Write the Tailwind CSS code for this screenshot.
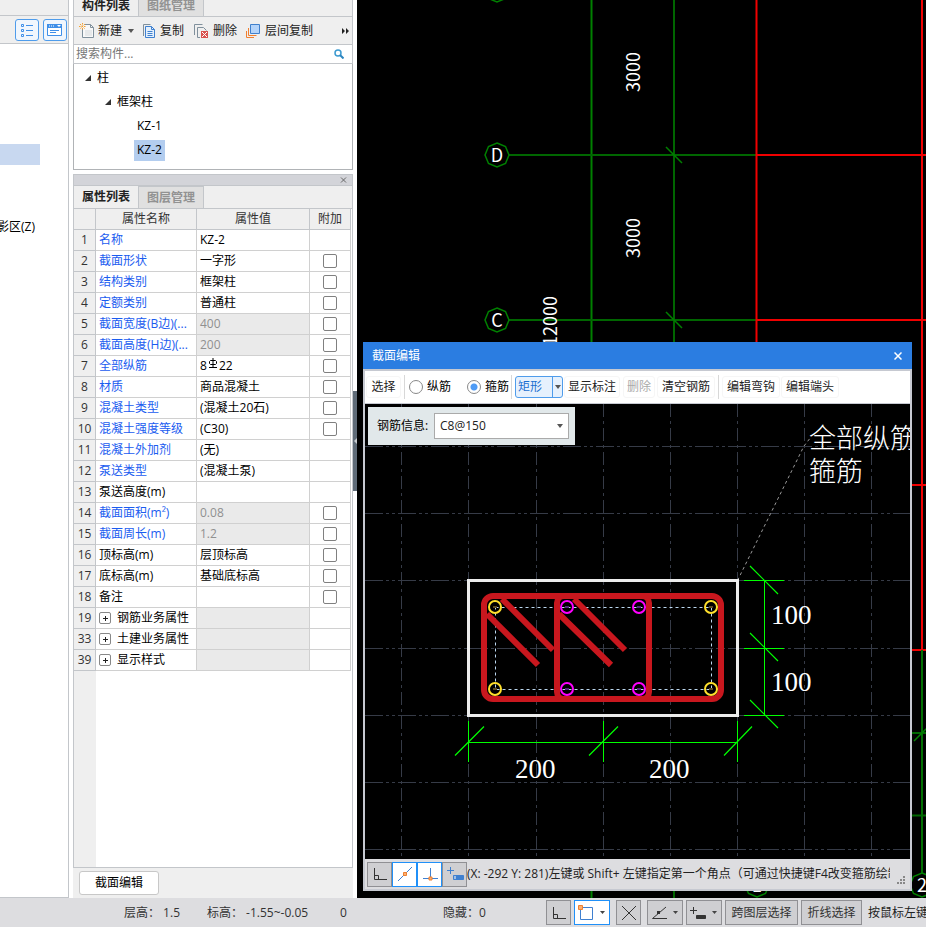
<!DOCTYPE html>
<html lang="zh-CN">
<head>
  <meta charset="UTF-8" />
  <meta name="viewport" content="width=device-width, initial-scale=1.0" />
  <title>构件列表 - 截面编辑</title>
  <script src="https://cdn.jsdelivr.net/npm/@tailwindcss/browser@4"></script>
</head>
<body class="h-screen flex flex-col overflow-hidden bg-white text-black text-[12px] leading-[20px] font-['Open_Sans','Noto_Sans_CJK_SC',sans-serif]">

  <main class="flex-1 min-h-0 flex">

    <!-- Navigation strip -->
    <aside class="w-[69px] shrink-0 mr-1 border-r border-b border-[#c3c6ca] overflow-hidden">
      <div class="h-4 bg-[#efefef] border-b border-[#c3c6ca]"></div>
      <div class="h-7 bg-[#efefef] border-b border-[#c3c6ca] flex items-center justify-end gap-1 pr-px">
        <button aria-label="列表" class="w-6 h-[22px] border border-[#4f9ceb] rounded-[3px] bg-[#f0f6fd] flex items-center justify-center">
          <svg width="14" height="14" fill="none" stroke="#3f8fe8"><path d="M1.500 1.500h2v2h-2zM1.500 6.500h2v2h-2zM1.500 11.500h2v2h-2z"/><path d="M6 2.500h7M6 7.500h7M6 12.500h7"/></svg>
        </button>
        <button aria-label="窗口" class="w-6 h-[22px] border border-[#4f9ceb] rounded-[3px] bg-[#f0f6fd] flex items-center justify-center">
          <svg width="16" height="14" fill="none" stroke="#3f8fe8"><path d="M.5 1.500h14v11h-14z" fill="#fff"/><path d="M0 3h15" stroke-width="4"/><path d="M2 3h5" stroke="#fff" stroke-dasharray="1 1"/><path d="M10 2h4l-2 2z" fill="#fff" stroke="none"/><path d="M3 7.500h9M3 9.500h6"/></svg>
        </button>
      </div>
      <div class="mt-[100px] w-10 h-[21px] bg-[#c8d8f0]"></div>
      <div class="mt-[52px] -ml-[3px] whitespace-nowrap">影区(Z)</div>
    </aside>

    <!-- Component list and properties -->
    <section class="w-[280px] shrink-0 flex flex-col bg-[#efefef]">
      <div class="h-[17px] shrink-0 flex border-x border-b border-[#c3c6ca]">
        <button class="w-16 h-4 font-bold text-[#222] flex items-end justify-center">构件列表</button>
        <button class="w-[66px] h-4 font-bold text-[#929292] bg-[#e0e0e0] border-x border-[#c3c6ca] flex items-end justify-center">图纸管理</button>
      </div>
      <div class="h-7 shrink-0 flex items-center border-x border-b border-[#c3c6ca] pl-[5px] pr-[2px] text-[#222]">
        <button class="flex items-center gap-[3px]">
          <svg width="16" height="16" fill="none"><path d="M3.500 6v8.500h11V4.500l-3-3H6" fill="#f8f8f8" stroke="#80909c"/><path d="M11.500 1.500v3h3" stroke="#80909c"/><path d="M6 8h7M6 10h7M6 12h7" stroke="#d5d9dc"/><path d="M1 1l5 5M6 1L1 6M3.500 0v7M0 3.500h7" stroke="#f7a12e" stroke-dasharray="1.500 1"/></svg>
          新建
        </button>
        <svg class="ml-[6px] mr-2" width="6" height="4"><path d="M0 0h6L3 4z" fill="#555"/></svg>
        <button class="flex items-center gap-1">
          <svg width="14" height="16" fill="none" stroke="#3f80cf"><path d="M1.500 13V1.500h7" stroke="#80909c"/><path d="M3.500 3.500h6l3 3v8h-9z" fill="#e4f0fd"/><path d="M9.500 3.500v3h3M5.500 8.500h5M5.500 10.500h5M5.500 12.500h5"/></svg>
          复制
        </button>
        <button class="ml-[9px] flex items-center gap-1">
          <svg width="16" height="16" fill="none" stroke="#80909c"><path d="M1.500 12V1.500h8"/><path d="M7 14.500H4.500v-10h6l3 3"/><path d="M8 8h7v7H8z" fill="#d9534f" stroke="none"/><path d="M9 9l5 5M14 9l-5 5" stroke="#fff"/></svg>
          删除
        </button>
        <button class="ml-2 flex items-center gap-1">
          <svg width="16" height="16" fill="none"><path d="M1.500 8v6.500H9M3.500 5v7.500h8" stroke="#f08030"/><path d="M5.500 1.500h9v9h-9z" fill="#b4d4fa" stroke="#4080cc"/></svg>
          层间复制
        </button>
        <button aria-label="更多" class="ml-auto"><svg width="9" height="6" fill="#222"><path d="M1 0l3 3-3 3zM5 0l3 3-3 3z"/></svg></button>
      </div>
      <div class="h-[19px] shrink-0 flex items-center bg-white border-x border-b border-[#c3c6ca] pl-[2px] pr-2">
        <input type="text" aria-label="搜索构件" placeholder="搜索构件..." class="flex-1 min-w-0 h-[18px] outline-none placeholder:text-[#777]" />
        <svg width="10" height="10" fill="none"><circle cx="4" cy="4" r="3" stroke="#3c9ad0" stroke-width="1.500"/><path d="M6 6l3.500 3.500" stroke="#2c86c0" stroke-width="2"/></svg>
      </div>
      <ul class="h-[106px] shrink-0 bg-white border-x border-b border-[#b0b3b6] pt-[2px] leading-6">
        <li class="pl-[11px] flex items-center gap-[6px]"><svg width="6" height="6"><path d="M6 0v6H0z" fill="#333"/></svg>柱</li>
        <li class="pl-[31px] flex items-center gap-[6px]"><svg width="6" height="6"><path d="M6 0v6H0z" fill="#333"/></svg>框架柱</li>
        <li class="pl-[63px]">KZ-1</li>
        <li class="pl-[60px] flex items-center h-6"><span class="px-[3px] h-[21px] leading-[20px] bg-[#b3cdef]">KZ-2</span></li>
      </ul>

      <div class="h-1 shrink-0 bg-white"></div>
      <div class="h-3 shrink-0 bg-[#d3d4d9] border border-[#c3c6ca] flex items-center justify-end pr-[5px]">
        <button aria-label="关闭"><svg class="block" width="7" height="6" stroke="#666"><path d="M1 .5l5 5M6 .5l-5 5"/></svg></button>
      </div>
      <div class="h-[23px] shrink-0 flex border-x border-b border-[#c3c6ca]">
        <button class="w-16 font-bold text-[#222]">属性列表</button>
        <button class="w-[66px] font-bold text-[#929292] bg-[#e0e0e0] border-x border-t border-[#c3c6ca]">图层管理</button>
      </div>
      <div class="flex-1 min-h-0 bg-white border-x border-b border-[#c3c6ca] flex flex-col">
        <table class="w-[277px] table-fixed border-separate border-spacing-0">
          <colgroup><col class="w-[22px]" /><col class="w-[101px]" /><col class="w-[113px]" /><col class="w-[41px]" /></colgroup>
          <thead>
            <tr class="h-[21px] bg-[#efefef] text-[#333]">
              <th class="border-r border-b border-[#c3c6ca]"></th>
              <th class="border-r border-b border-[#c3c6ca] font-normal p-0">属性名称</th>
              <th class="border-r border-b border-[#c3c6ca] font-normal p-0">属性值</th>
              <th class="border-r border-b border-[#c3c6ca] font-normal p-0">附加</th>
            </tr>
          </thead>
          <tbody id="props"></tbody>
        </table>
        <div class="flex-1 w-[22px] bg-[#efefef]"></div>
      </div>
      <div class="h-[30px] shrink-0 pl-[6px] pt-[3px]">
        <button class="w-20 h-6 bg-white border border-[#c8c8c8] rounded-[3px]">截面编辑</button>
      </div>
    </section>

    <!-- Splitter -->
    <div class="w-1 shrink-0 flex items-center">
      <div class="w-1 h-[100px] mt-[-16px] bg-[#606c78] flex items-center"><svg width="4" height="6"><path d="M4 0v6L1 3z" fill="#c8ccd0"/></svg></div>
    </div>

    <!-- Drawing area -->
    <section class="flex-1 min-w-0 relative bg-black overflow-hidden">
      <svg class="block w-full h-full" fill="none">
        <g transform="translate(-357 0)">
          <path d="M591.500 0v898" stroke="#008000" stroke-width="2"/>
          <path d="M674 0v898M509 155h248M509 320h248" stroke="#006600" stroke-width="2"/>
          <path d="M756.500 0v873M757 155h200M757 320h200" stroke="#f00000" stroke-width="2"/>
          <path d="M922 0v650M900 485h60M900 650h60" stroke="#f00000" stroke-width="2"/>
          <path d="M922 650v223" stroke="#007000" stroke-width="2"/>
          <path d="M900 733h60M900 815.500h60" stroke="#006600" stroke-width="2"/>
          <path d="M666 147l16 16M666 312l16 16M914 741l16-16" stroke="#008000" stroke-width="1.500"/>
          <g stroke="#008000" stroke-width="1.500">
            <path d="M497 143l8.500 3.500L509 155l-3.500 8.500L497 167l-8.500-3.500L485 155l3.500-8.500z"/>
            <path d="M497 308l8.500 3.500L509 320l-3.500 8.500L497 332l-8.500-3.500L485 320l3.500-8.500z"/>
            <path d="M497-22l8.500 3.500L509-10l-3.500 8.500L497 2l-8.500-3.500L485-10l3.500-8.500z"/>
            <path d="M757 873l8.500 3.500L769 885l-3.500 8.500L757 897l-8.500-3.500L745 885l3.500-8.500z"/>
            <path d="M922 873l8.500 3.500L934 885l-3.500 8.500L922 897l-8.500-3.500L910 885l3.500-8.500z"/>
          </g>
          <g fill="#fff" font-size="18" text-anchor="middle" font-family="'Noto Sans CJK SC', sans-serif">
            <text x="497" y="162">D</text>
            <text x="497" y="327">C</text>
            <text x="757" y="892">1</text>
            <text x="922" y="892">2</text>
            <text transform="translate(640 72) rotate(-90)">3000</text>
            <text transform="translate(640 238) rotate(-90)">3000</text>
            <text transform="translate(557 321) rotate(-90)">12000</text>
          </g>
        </g>
      </svg>

      <!-- Section editor window -->
      <div class="absolute left-[6px] top-[342px] w-[549px] h-[549px] flex flex-col">
        <header class="h-[27px] shrink-0 bg-[#2b7de1] text-white flex items-center justify-between pl-[9px] pr-[10px]">
          <h2>截面编辑</h2>
          <button aria-label="关闭窗口"><svg width="8" height="8" stroke="#fff" stroke-width="1.500"><path d="M.5.5l7 7M7.500.5l-7 7"/></svg></button>
        </header>
        <div class="flex-1 min-h-0 flex flex-col border-2 border-[#c6c9d1]">
          <div class="h-[33px] shrink-0 bg-white border-b border-[#c6c9d1] flex items-center text-[#222] whitespace-nowrap">
            <button class="ml-px w-[35px] h-[22px] border border-[#f6f6f6] rounded-[3px]">选择</button>
            <span class="ml-[3px] w-px h-6 bg-[#d8d8d8]"></span>
            <label class="ml-1 flex items-center gap-1 text-black">
              <input type="radio" name="bar" class="appearance-none w-[14px] h-[14px] rounded-full border border-[#888] bg-white" />纵筋
            </label>
            <label class="ml-4 flex items-center gap-1 text-black">
              <input type="radio" name="bar" checked class="appearance-none w-[14px] h-[14px] rounded-full border border-[#888] bg-white checked:bg-[radial-gradient(circle,#4f9bf5_3px,#fff_4px)]" />箍筋
            </label>
            <span class="ml-[2px] w-px h-6 bg-[#d8d8d8]"></span>
            <div class="ml-[3px] w-12 h-[22px] flex border border-[#4f9ceb] rounded-[3px] bg-[#e6f1fd]">
              <button class="flex-1 text-[#1b6fd0] pr-[8px]">矩形</button>
              <button aria-label="选择形状" class="w-[10px] border-l border-[#4f9ceb] flex items-center justify-center"><svg width="6" height="4"><path d="M0 0h6L3 4z" fill="#555"/></svg></button>
            </div>
            <button class="ml-px w-14 h-[22px] border border-[#f6f6f6] rounded-[3px]">显示标注</button>
            <button disabled class="ml-[3px] w-8 h-[22px] border border-[#f6f6f6] rounded-[3px] text-[#aaa]">删除</button>
            <button class="ml-[2px] w-[58px] h-[22px] border border-[#f6f6f6] rounded-[3px]">清空钢筋</button>
            <span class="ml-[3px] w-px h-6 bg-[#d8d8d8]"></span>
            <button class="ml-[3px] w-[58px] h-[22px] border border-[#f6f6f6] rounded-[3px]">编辑弯钩</button>
            <button class="ml-px w-[58px] h-[22px] border border-[#f6f6f6] rounded-[3px]">编辑端头</button>
          </div>

          <div class="flex-1 min-h-0 relative bg-black overflow-hidden">
            <svg class="block w-full h-full" fill="none">
              <g transform="translate(-365 -404)">
                <path d="M401.500 404v460M468.500 404v460M536.500 404v460M603.500 404v460M670.500 404v460M737.500 404v460M804.500 404v460M871.500 404v460" stroke="#363b47" stroke-dasharray="13 4 3 4"/>
                <path d="M365 446.500h550M365 513.500h550M365 580.500h550M365 648.500h550M365 715.500h550M365 782.500h550M365 849.500h550" stroke="#363b47" stroke-dasharray="18 3 3 3 3 3"/>
                <path d="M737.500 580.500L804 446l7-9" stroke="#999" stroke-dasharray="3 3"/>
                <path d="M468.500 580.500h269v135h-269z" stroke="#ececec" stroke-width="3"/>
                <path d="M495.500 607.500h216v82h-216z" stroke="#bcd8f0" stroke-dasharray="3 3"/>
                <g stroke="#c8171e" stroke-width="6">
                  <rect x="484" y="596" width="237" height="103" rx="9"/>
                  <rect x="557" y="596" width="92" height="103" rx="7"/>
                  <path d="M487 614l51 51M502 599l51 51M559 614l52 51M574 599l51 51"/>
                </g>
                <g stroke="#ffe02c" stroke-width="2">
                  <circle cx="495" cy="607" r="6"/><circle cx="495" cy="689" r="6"/><circle cx="711" cy="607" r="6"/><circle cx="711" cy="689" r="6"/>
                </g>
                <path d="M493 607h4M493 689h4M709 607h4M709 689h4" stroke="#5a4a20" stroke-width="2"/>
                <g stroke="#f0f" stroke-width="2">
                  <circle cx="567" cy="607" r="6"/><circle cx="639" cy="607" r="6"/><circle cx="567" cy="689" r="6"/><circle cx="639" cy="689" r="6"/>
                </g>
                <path d="M565 607h4M637 607h4M565 689h4M637 689h4" stroke="#502080" stroke-width="2"/>
                <path d="M468 742.500h270M468.500 721v41M603.500 721v41M737.500 721v41M764.500 580v136M744 580.500h40M744 648.500h40M744 715.500h40" stroke="#0f0"/>
                <path d="M455 755.500l29-29M589 755.500l29-29M724 755.500l28-29M750 566l28 28M750 633l28 28M750 700l28 28" stroke="#0f0" stroke-width="1.200"/>
                <g fill="#fff" font-size="27" font-family="'Liberation Serif', serif">
                  <text x="515" y="778">200</text>
                  <text x="649" y="778">200</text>
                  <text x="771" y="624">100</text>
                  <text x="771" y="691">100</text>
                </g>
                <g fill="#fff" font-size="27" font-weight="300" font-family="'Noto Sans CJK SC', sans-serif">
                  <text x="809" y="448">全部纵筋</text>
                  <text x="809" y="481">箍筋</text>
                </g>
              </g>
            </svg>
            <div class="absolute left-[3px] top-[3px] w-[207px] h-[38px] bg-[#e1e8ea] flex items-center pl-[9px] gap-[5px]">
              <label for="barInfo" class="w-[52px] whitespace-nowrap">钢筋信息:</label>
              <div class="relative w-[135px] h-[26px]">
                <select id="barInfo" class="appearance-none w-full h-full bg-white border border-[#aaa] pl-[5px] text-[#222]"><option>C8@150</option></select>
                <svg class="absolute right-[6px] top-[11px] pointer-events-none" width="6" height="4"><path d="M0 0h6L3 4z" fill="#555"/></svg>
              </div>
            </div>
          </div>

          <footer class="h-[30px] shrink-0 bg-[#dddde0] flex items-center pl-[2px] pr-1 text-[#222]">
            <button aria-label="正交" class="w-[25px] h-[25px] shrink-0 bg-[#cfcfd2] border border-[#909094] flex items-center justify-center"><svg width="14" height="14" fill="none" stroke="#333"><path d="M1.500 1v11.500H14M1.500 8.500h4v4"/></svg></button>
            <button aria-label="中点" class="w-[25px] h-[25px] shrink-0 bg-white border border-[#2090f8] flex items-center justify-center"><svg width="16" height="16" fill="none"><path d="M1 15L15 1" stroke="#3f80d0"/><path d="M6.500 6.500h3v3h-3z" stroke="#f08030" fill="#fbb070"/></svg></button>
            <button aria-label="垂点" class="w-[25px] h-[25px] shrink-0 bg-white border border-[#2090f8] flex items-center justify-center"><svg width="16" height="16" fill="none"><path d="M8.500 2v11M1 12.500h15" stroke="#3f80d0"/><path d="M7 11h3v3H7z" stroke="#f08030" fill="#fbb070"/></svg></button>
            <button aria-label="偏移" class="w-[25px] h-[25px] shrink-0 bg-[#cfcfd2] border border-[#909094] flex items-center justify-center"><svg width="18" height="16" fill="none" stroke="#3f80d0"><path d="M1 4.500h7M4.500 1v7"/><path d="M7.500 9.500h10v4h-10z" fill="#3f80d0"/><path d="M9 10v3" stroke="#fff"/></svg></button>
            <p class="flex-1 min-w-0 mr-[7px] overflow-hidden whitespace-nowrap">(X: -292 Y: 281)左键或 Shift+ 左键指定第一个角点（可通过快捷键F4改变箍筋绘制</p>
            <svg class="self-end mb-1" width="9" height="9" fill="#888"><path d="M6 0h2v2H6zM3 3h2v2H3zM6 3h2v2H6zM0 6h2v2H0zM3 6h2v2H3zM6 6h2v2H6z"/></svg>
          </footer>
        </div>
      </div>
    </section>
  </main>

  <!-- Status bar -->
  <footer class="h-[29px] shrink-0 bg-[#dddde0] flex items-center whitespace-nowrap text-[#333] overflow-hidden">
    <div class="w-[546px] shrink-0 flex pl-[124px]">
      <span class="w-[83px]">层高： 1.5</span>
      <span class="w-[133px]">标高： -1.55~-0.05</span>
      <span class="w-[103px]">0</span>
      <span>隐藏：0</span>
    </div>
    <div class="flex items-center gap-[3px] shrink-0">
      <button aria-label="正交模式" class="w-[25px] h-[25px] bg-[#cfcfd2] border border-[#909094] flex items-center justify-center"><svg width="14" height="14" fill="none" stroke="#333"><path d="M1.500 1v11.500H14M1.500 8.500h4v4"/></svg></button>
      <button aria-label="矩形框选" class="w-9 h-[25px] bg-white border border-[#2090f8] flex items-center justify-between px-[3px]"><svg width="16" height="16" fill="none"><path d="M2.500 2.500h12v12h-12z" stroke="#3f80d0"/><path d="M.5.5h4v4h-4z" stroke="#f08030" fill="#fbb070"/></svg><svg width="6" height="4"><path d="M0 0h5L2.500 3z" fill="#444"/></svg></button>
      <button aria-label="交点" class="ml-[3px] w-[25px] h-[25px] bg-[#cfcfd2] border border-[#909094] flex items-center justify-center"><svg width="16" height="16" fill="none" stroke="#333"><path d="M1 1l14 14M15 1L1 15"/><path d="M7 7h2v2H7z" fill="#333" stroke="none"/></svg></button>
      <button aria-label="角度捕捉" class="ml-[3px] w-9 h-[25px] bg-[#cfcfd2] border border-[#909094] flex items-center justify-between px-[3px]"><svg width="17" height="14" fill="none" stroke="#333"><path d="M15 1L1.500 12.500H16"/><path d="M6 5h3v3H6z" fill="#333" stroke="none"/></svg><svg width="6" height="4"><path d="M0 0h5L2.500 3z" fill="#444"/></svg></button>
      <button aria-label="偏移输入" class="w-9 h-[25px] bg-[#cfcfd2] border border-[#909094] flex items-center justify-between px-[3px]"><svg width="17" height="14" fill="none" stroke="#333"><path d="M0 4.500h7M3.500 1v7"/><path d="M6.500 9.500h9v3h-9z" fill="#333"/></svg><svg width="6" height="4"><path d="M0 0h5L2.500 3z" fill="#444"/></svg></button>
      <button class="w-[73px] h-[25px] bg-[#cfcfd2] border border-[#909094]">跨图层选择</button>
      <button class="w-[61px] h-[25px] bg-[#cfcfd2] border border-[#909094]">折线选择</button>
      <span class="ml-[3px] text-[#222]">按鼠标左键</span>
    </div>
  </footer>

  <script>
    // no, name, value, has checkbox, style: b = blue, k = black, g = blue with grey value, x = expandable group
    const rows = [
      [1, "名称", "KZ-2", 0, "b"],
      [2, "截面形状", "一字形", 1, "b"],
      [3, "结构类别", "框架柱", 1, "b"],
      [4, "定额类别", "普通柱", 1, "b"],
      [5, "截面宽度(B边)(...", "400", 1, "g"],
      [6, "截面高度(H边)(...", "200", 1, "g"],
      [7, "全部纵筋", `8<svg class="inline-block align-[2px] mx-px" width="10" height="10" fill="none" stroke="#000"><path d="M5 0v9M2.500 2.500h5l1 1v2l-1 1h-5l-1-1v-2zM1 9.500h8"/></svg>22`, 1, "b"],
      [8, "材质", "商品混凝土", 1, "b"],
      [9, "混凝土类型", "(混凝土20石)", 1, "b"],
      [10, "混凝土强度等级", "(C30)", 1, "b"],
      [11, "混凝土外加剂", "(无)", 0, "b"],
      [12, "泵送类型", "(混凝土泵)", 0, "b"],
      [13, "泵送高度(m)", "", 0, "k"],
      [14, "截面面积(m²)", "0.08", 1, "g"],
      [15, "截面周长(m)", "1.2", 1, "g"],
      [16, "顶标高(m)", "层顶标高", 1, "k"],
      [17, "底标高(m)", "基础底标高", 1, "k"],
      [18, "备注", "", 1, "k"],
      [19, "钢筋业务属性", "", 0, "x"],
      [33, "土建业务属性", "", 0, "x"],
      [39, "显示样式", "", 0, "x"]
    ];
    const nameClass = { b: "text-[#1a5cf0]", g: "text-[#1a5cf0]", k: "text-black", x: "text-black" };
    const valueClass = { b: "", k: "", g: "bg-[#eaeaea] text-[#909090]", x: "bg-[#eaeaea]" };

    document.getElementById("props").innerHTML = rows.map(([no, name, value, check, s]) => `
      <tr class="h-[21px] whitespace-nowrap">
        <td class="p-0 text-center bg-[#efefef] text-[#333] border-r border-b border-[#c3c6ca]">${no}</td>
        <td class="p-0 pl-[3px] border-r border-b border-[#d0d0d0] overflow-hidden ${nameClass[s]}">
          <div class="flex items-center">
            ${s === "x" ? `<button aria-label="展开${name}" class="w-3 h-3 mr-[6px] border border-[#888] rounded-[2px] flex items-center justify-center"><svg width="5" height="5" stroke="#222"><path d="M0 2.500h5M2.500 0v5"/></svg></button>` : ""}${name}
          </div>
        </td>
        <td class="p-0 pl-[3px] border-r border-b border-[#d0d0d0] ${valueClass[s]}"><div class="h-5">${value}</div></td>
        <td class="p-0 border-r border-b border-[#d0d0d0]">
          ${check ? `<input type="checkbox" aria-label="附加 ${name}" class="appearance-none block mx-auto w-[14px] h-[14px] bg-white border border-[#808080] rounded-[2px]" />` : ""}
        </td>
      </tr>`).join("");
  </script>

</body>
</html>
